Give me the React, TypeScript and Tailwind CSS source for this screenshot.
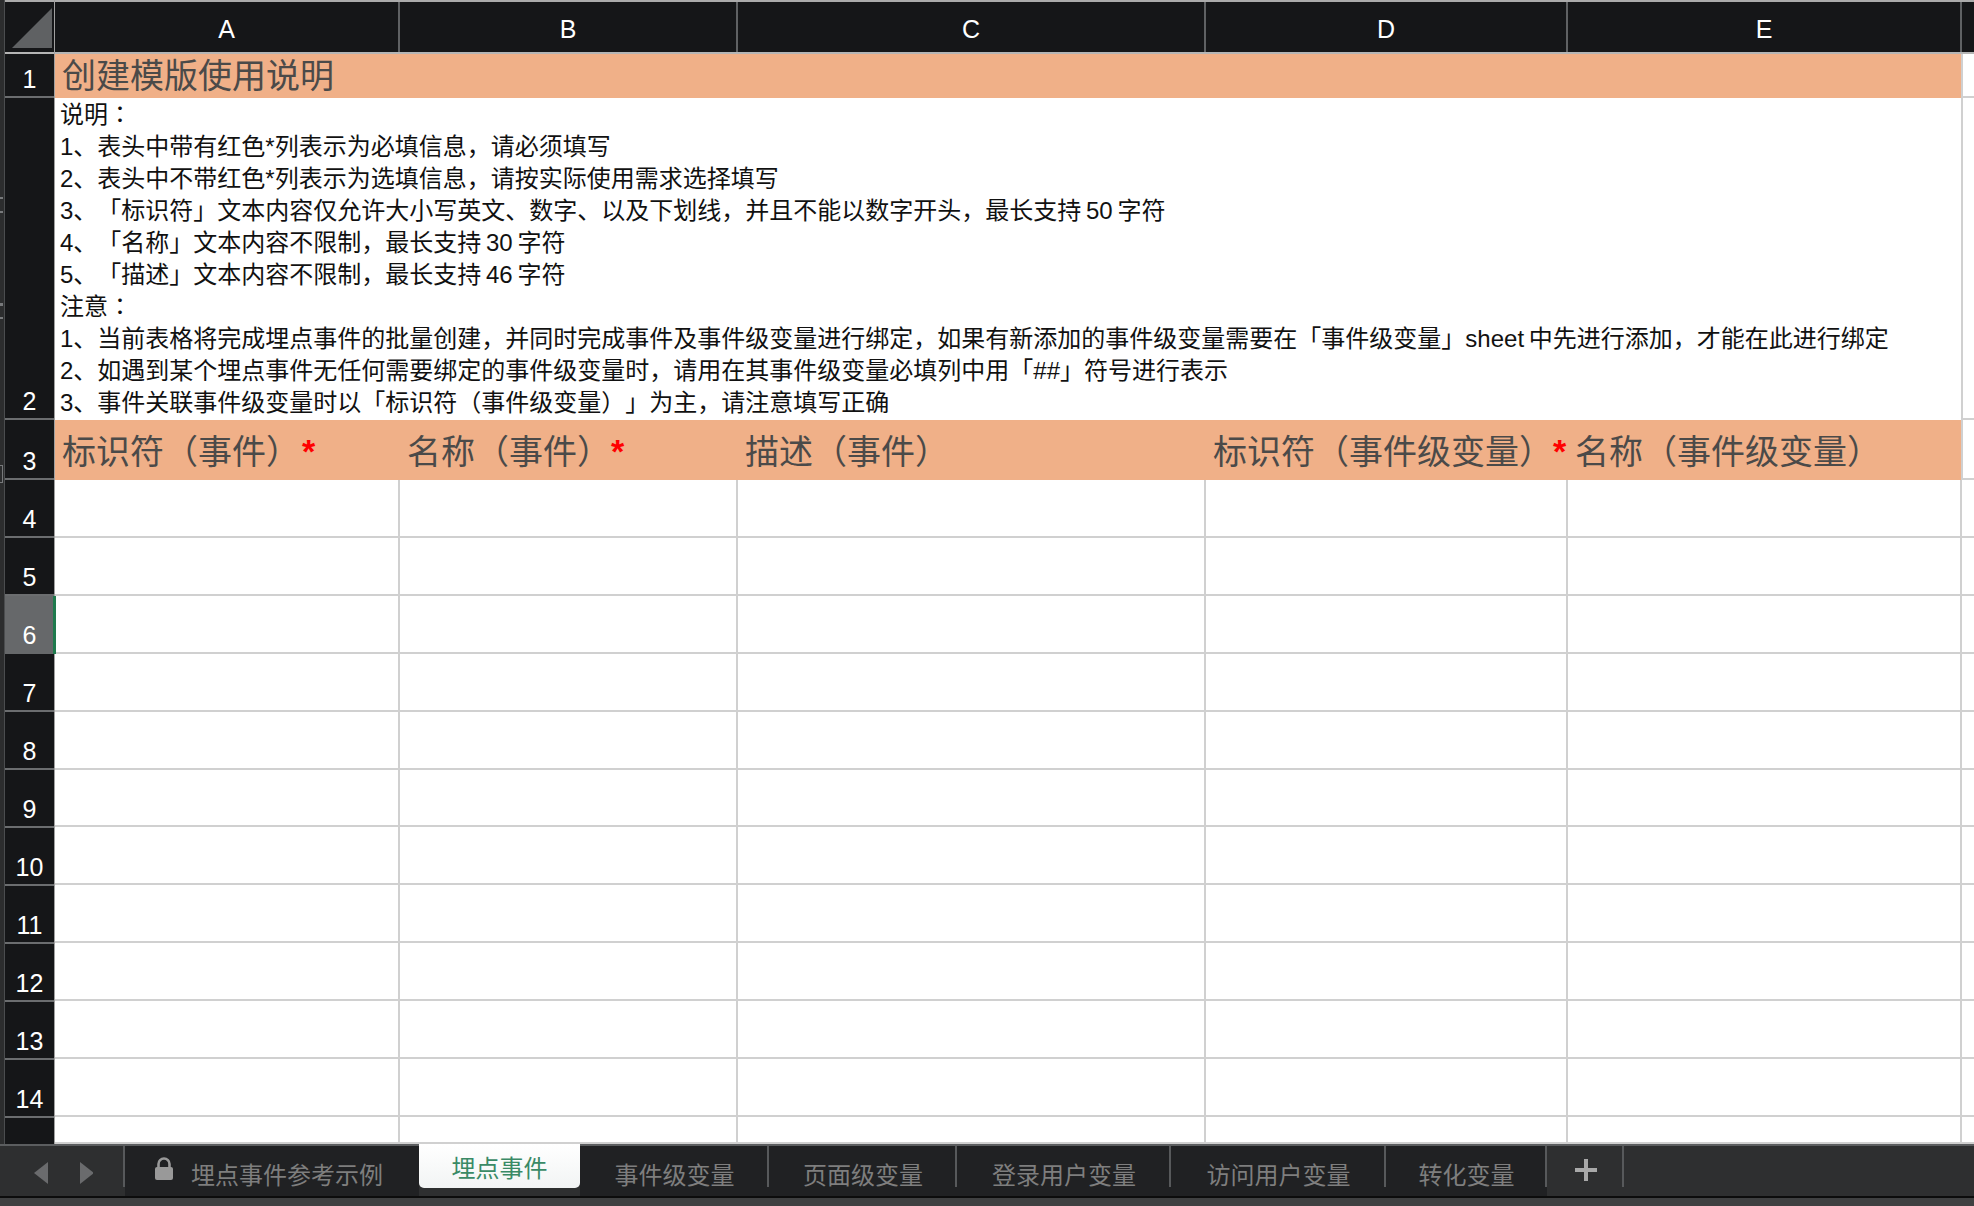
const FONT = '"Liberation Sans","Noto Sans CJK SC",sans-serif';
const JP = '"Noto Sans CJK JP",sans-serif';

const notes: [string, boolean][] = [
  ["说明", true],
  ["1、表头中带有红色*列表示为必填信息，请必须填写", false],
  ["2、表头中不带红色*列表示为选填信息，请按实际使用需求选择填写", false],
  ["3、「标识符」文本内容仅允许大小写英文、数字、以及下划线，并且不能以数字开头，最长支持 50 字符", false],
  ["4、「名称」文本内容不限制，最长支持 30 字符", false],
  ["5、「描述」文本内容不限制，最长支持 46 字符", false],
  ["注意", true],
  ["1、当前表格将完成埋点事件的批量创建，并同时完成事件及事件级变量进行绑定，如果有新添加的事件级变量需要在「事件级变量」sheet 中先进行添加，才能在此进行绑定", false],
  ["2、如遇到某个埋点事件无任何需要绑定的事件级变量时，请用在其事件级变量必填列中用「##」符号进行表示", false],
  ["3、事件关联事件级变量时以「标识符（事件级变量）」为主，请注意填写正确", false],
];

const rowNums = [4, 5, 6, 7, 8, 9, 10, 11, 12, 13, 14];

function RowHead({ n, h, active }: { n: number; h: number; active?: boolean }) {
  return (
    <div
      className={`w-full shrink-0 flex items-end justify-center pb-[2px] text-[25px] leading-[30px] text-white border-b-2 ${
        active ? "bg-[#66686a] border-b-[#66686a]" : "bg-[#151618] border-b-[#6b6d6f]"
      }`}
      style={{ height: h }}
    >
      {n}
    </div>
  );
}

function GridRow({ h, active }: { h: number; active?: boolean }) {
  const cell = "h-full border-r-2 border-r-[#d0d0d0] shrink-0";
  return (
    <div className="flex border-b-2 border-b-[#d0d0d0] box-border" style={{ height: h }}>
      <div className={`${cell} w-[345px] relative`}>
        {active && <div className="absolute left-[-2px] top-0 bottom-[-2px] w-[3px] bg-[#1f7a4d]" />}
      </div>
      <div className={`${cell} w-[338px]`} />
      <div className={`${cell} w-[468px]`} />
      <div className={`${cell} w-[362px]`} />
      <div className={`${cell} w-[394px]`} />
      <div className="flex-1" />
    </div>
  );
}

function Tab({ w, label }: { w: number; label: string }) {
  return (
    <div
      className="shrink-0 h-full bg-[#202123] flex justify-center items-center pt-[9px] text-[24px] text-[#7e7e7e] relative"
      style={{ width: w }}
    >
      {label}
      <div className="absolute right-0 top-0 h-[41px] w-[2px] bg-[#57595b]" />
    </div>
  );
}

function Star({ className }: { className?: string }) {
  return <span className={`text-[#ff0000] font-bold relative top-[-1px] ${className ?? ""}`}>*</span>;
}

export default function App() {
  return (
    <div
      className="w-[1974px] h-[1206px] overflow-hidden flex flex-col bg-[#2e2f30] [text-spacing-trim:space-all]"
      style={{ fontFamily: FONT }}
    >
      {/* sheet area */}
      <div className="h-[1144px] flex pl-[4px] bg-white relative shrink-0">
        <div className="absolute left-0 top-0 bottom-0 w-[4px] bg-[#2c2d2e]">
          <div className="absolute left-0 top-[197px] w-[3px] h-[2px] bg-[#77797b]" />
          <div className="absolute left-0 top-[211px] w-[3px] h-[2px] bg-[#77797b]" />
          <div className="absolute left-0 top-[303px] w-[3px] h-[3px] bg-[#77797b]" />
          <div className="absolute left-0 top-[317px] w-[3px] h-[2px] bg-[#77797b]" />
          <div className="absolute left-0 top-[465px] w-[3px] h-[18px] border border-l-0 border-[#77797b]" />
        </div>
        {/* row headers */}
        <div className="w-[50px] shrink-0 flex flex-col bg-[#151618] border-l border-l-[#4b4d4f]">
          <div className="h-[54px] shrink-0 border-t-2 border-t-[#ababab] border-b-2 border-b-[#b5b5b5] relative">
            <svg className="absolute left-[7px] top-[6px]" width="40" height="40" viewBox="0 0 40 40">
              <polygon points="40,0 40,40 0,40" fill="#5f6163" />
            </svg>
          </div>
          <RowHead n={1} h={44} />
          <RowHead n={2} h={322} />
          <RowHead n={3} h={60} />
          {rowNums.map((n) => (
            <RowHead key={n} n={n} h={58} active={n === 6} />
          ))}
          <div className="flex-1" />
        </div>

        {/* body */}
        <div className="flex-1 flex flex-col min-w-0 border-l border-l-[#a0a0a0]">
          {/* column header */}
          <div className="h-[54px] shrink-0 flex bg-[#151618] border-t-2 border-t-[#ababab] border-b-2 border-b-[#b5b5b5] text-[25px] text-white">
            {[
              ["A", "w-[345px]"],
              ["B", "w-[338px]"],
              ["C", "w-[468px]"],
              ["D", "w-[362px]"],
              ["E", "w-[394px]"],
            ].map(([l, w]) => (
              <div key={l} className={`${w} shrink-0 flex items-center justify-center pt-[5px] border-r-2 border-r-[#5f6163]`}>
                {l}
              </div>
            ))}
            <div className="flex-1" />
          </div>

          {/* row 1 */}
          <div className="h-[44px] shrink-0 flex">
            <div className="w-[1906px] shrink-0 bg-[#f0b088] text-[34px] leading-[44px] text-[#4b4a49] pl-[7px] whitespace-nowrap">
              创建模版使用说明
            </div>
            <div className="flex-1 border-b-2 border-b-[#d0d0d0] border-l-2 border-l-[#d0d0d0]" />
          </div>

          {/* row 2 */}
          <div className="h-[322px] shrink-0 flex">
            <div className="w-[1906px] shrink-0 pl-[5px] pt-[1px] text-[24px] leading-[32px] text-[#111] whitespace-nowrap [word-spacing:-2px]">
              {notes.map(([t, colon]) => (
                <div key={t}>
                  {t}
                  {colon && (
                    <span className="leading-none" style={{ fontFamily: JP }}>
                      ：
                    </span>
                  )}
                </div>
              ))}
            </div>
            <div className="flex-1 border-b-2 border-b-[#d0d0d0] border-l-2 border-l-[#d0d0d0]" />
          </div>

          {/* row 3 */}
          <div className="h-[60px] shrink-0 flex">
            <div className="w-[1906px] shrink-0 bg-[#f0b088] text-[34px] leading-[60px] text-[#4b4a49] flex whitespace-nowrap">
              <div className="w-[345px] shrink-0 pl-[7px] pt-[2px] h-full">
                标识符（事件）<Star className="ml-[2px]" />
              </div>
              <div className="w-[338px] shrink-0 pl-[7px] pt-[2px] h-full">
                名称（事件）<Star />
              </div>
              <div className="w-[468px] shrink-0 pl-[7px] pt-[2px] h-full">描述（事件）</div>
              <div className="w-[362px] shrink-0 pl-[7px] pt-[2px] h-full">
                标识符（事件级变量）<Star />
              </div>
              <div className="w-[393px] shrink-0 pl-[7px] pt-[2px] h-full">名称（事件级变量）</div>
            </div>
            <div className="flex-1 border-b-2 border-b-[#d0d0d0] border-l-2 border-l-[#d0d0d0]" />
          </div>

          {/* data rows */}
          {rowNums.map((n) => (
            <GridRow key={n} h={58} active={n === 6} />
          ))}
          <GridRow h={27} />
        </div>
      </div>

      {/* tab strip */}
      <div className="h-[52px] shrink-0 flex border-t-2 border-t-[#5b5d5f] pl-[4px] bg-[#2e2f30] text-[24px]">
        <div className="w-[121px] shrink-0 h-full flex items-center relative">
          <svg className="absolute left-[29px] top-[13px]" width="60" height="28" viewBox="0 0 60 28">
            <polygon points="15,3 15,25 1,14" fill="#6a6b6d" />
            <polygon points="47,3 47,25 61,14" fill="#6a6b6d" />
          </svg>
          <div className="absolute right-0 top-0 h-[41px] w-[2px] bg-[#57595b]" />
        </div>
        <div className="w-[294px] shrink-0 h-full bg-[#202123] relative flex items-center pl-[66px] pt-[9px] text-[#7e7e7e]">
          <svg className="absolute left-[29px] top-[11px]" width="20" height="24" viewBox="0 0 20 24">
            <path d="M4.5 10V7a5.5 5.5 0 0 1 11 0v3" fill="none" stroke="#999" strokeWidth="2.6" />
            <rect x="1" y="10" width="18" height="13" rx="2" fill="#999" />
          </svg>
          埋点事件参考示例
        </div>
        <div className="w-[161px] shrink-0 h-[44px] -mt-[2px] bg-gradient-to-b from-white to-[#f2f4f4] rounded-b-[5px] flex items-center justify-center pt-[6px] text-[#3a8a66] text-[24px]">
          埋点事件
        </div>
        <Tab w={189} label="事件级变量" />
        <Tab w={188} label="页面级变量" />
        <Tab w={214} label="登录用户变量" />
        <Tab w={215} label="访问用户变量" />
        <Tab w={161} label="转化变量" />
        <div className="w-[77px] shrink-0 h-full relative">
          <svg className="absolute left-[28px] top-[12px]" width="22" height="24" viewBox="0 0 22 24">
            <rect x="9" y="1" width="4" height="22" fill="#a9a9a9" />
            <rect x="0" y="10" width="22" height="4" fill="#a9a9a9" />
          </svg>
          <div className="absolute right-0 top-0 h-[41px] w-[2px] bg-[#57595b]" />
        </div>
        <div className="flex-1" />
      </div>

      {/* bottom status */}
      <div className="h-[10px] shrink-0 bg-[#3f4041] border-t-2 border-t-[#0c0c0c]" />
    </div>
  );
}
